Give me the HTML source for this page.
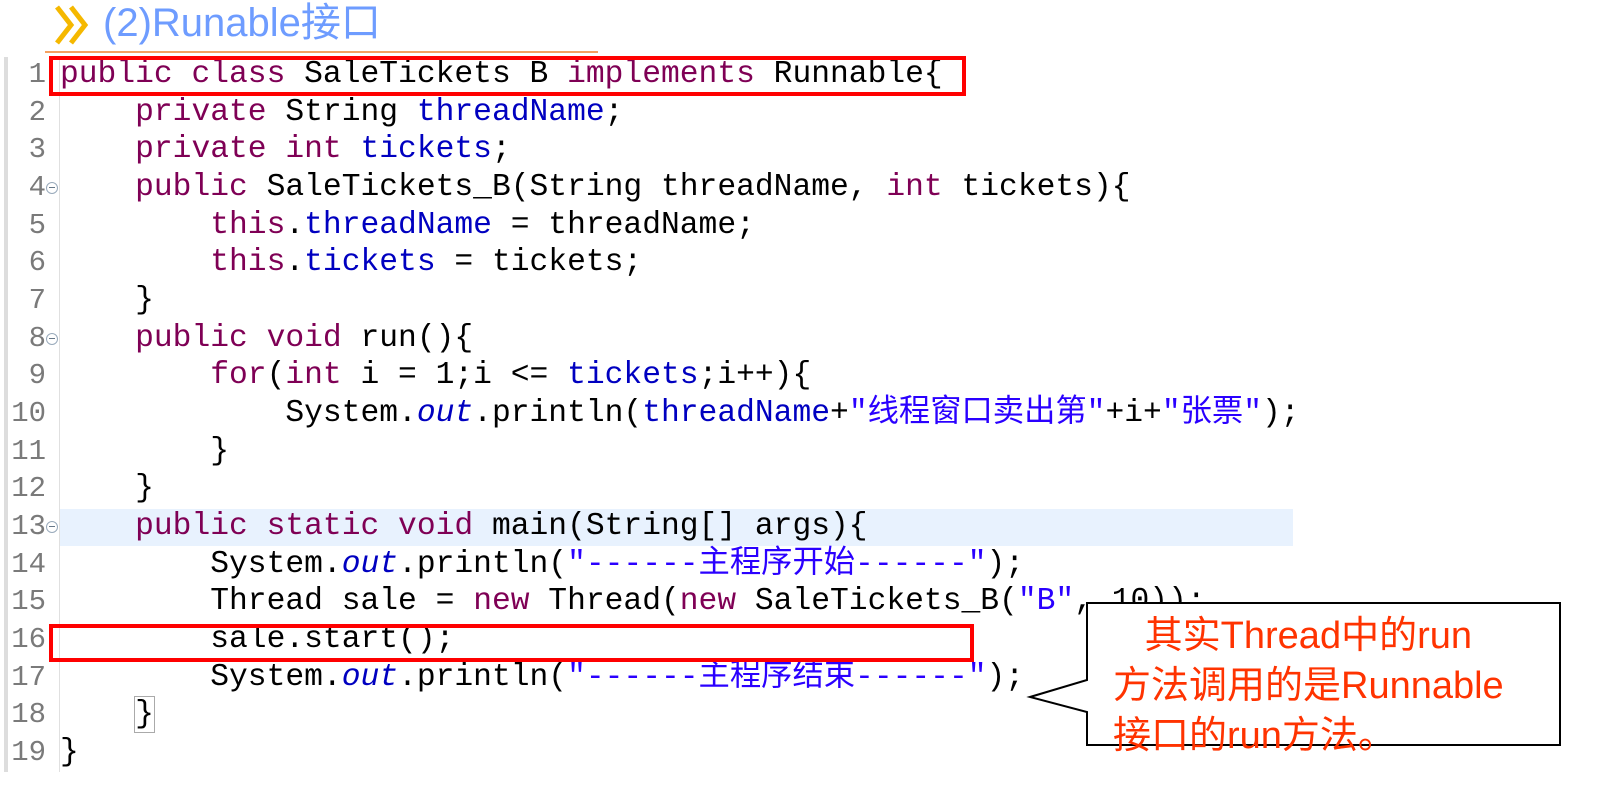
<!DOCTYPE html>
<html><head><meta charset="utf-8"><style>
body{margin:0;width:1599px;height:791px;background:#fff;position:relative;overflow:hidden;font-family:"Liberation Mono","Noto Sans CJK SC",monospace;}
.t{position:absolute;left:103px;top:-2px;font:40px "Liberation Sans","Noto Sans CJK SC",sans-serif;color:#6e9cff;line-height:50px;}
.hr{position:absolute;left:45px;top:51px;width:553px;height:2px;background:#f5a060;}
.code{position:absolute;left:0;top:56px;}
.ln{position:absolute;left:0;width:46px;text-align:right;color:#7a7a7a;font-size:29px;height:37.67px;line-height:37.67px;}
.l{position:absolute;left:60px;white-space:pre;font-size:31.3px;height:37.67px;line-height:37.67px;color:#000;}
.k{color:#7f0055}.f{color:#0000c0}.s{color:#2a00ff}.i{color:#0000c0;font-style:italic}
.fold{position:absolute;left:46px;width:10px;height:10px;border:1px solid #9ab;border-radius:50%;font-size:0}
.fold:after{content:"";position:absolute;left:2px;top:4px;width:6px;height:1px;background:#678}
.box{position:absolute;border:4px solid #f00;}
</style></head><body>
<svg style="position:absolute;left:55px;top:5px" width="40" height="40"><path d="M2 2 L16 20 L2 38 M16 2 L30 20 L16 38" stroke="#f5b800" stroke-width="5" fill="none"/></svg>
<div class="t">(2)Runable接口</div>
<div class="hr"></div>
<div style="position:absolute;left:4px;top:57px;width:4px;height:715px;background:#ddd"></div>
<div style="position:absolute;left:59px;top:57px;width:1px;height:715px;background:#e0e0e0"></div>
<div style="position:absolute;left:60px;top:509px;width:1233px;height:37px;background:#e8f2fe"></div>
<div class="code">
<div class="ln" style="top:0">1</div><div class="l" style="top:0"><span class="k">public class</span> SaleTickets B <span class="k">implements</span> Runnable{</div>
<div class="ln" style="top:37.67px">2</div><div class="l" style="top:37.67px">    <span class="k">private</span> String <span class="f">threadName</span>;</div>
<div class="ln" style="top:75.33px">3</div><div class="l" style="top:75.33px">    <span class="k">private int</span> <span class="f">tickets</span>;</div>
<div class="ln" style="top:113px">4</div><div class="fold" style="top:126px"></div><div class="l" style="top:113px">    <span class="k">public</span> SaleTickets_B(String threadName, <span class="k">int</span> tickets){</div>
<div class="ln" style="top:150.67px">5</div><div class="l" style="top:150.67px">        <span class="k">this</span>.<span class="f">threadName</span> = threadName;</div>
<div class="ln" style="top:188.33px">6</div><div class="l" style="top:188.33px">        <span class="k">this</span>.<span class="f">tickets</span> = tickets;</div>
<div class="ln" style="top:226px">7</div><div class="l" style="top:226px">    }</div>
<div class="ln" style="top:263.67px">8</div><div class="fold" style="top:277px"></div><div class="l" style="top:263.67px">    <span class="k">public void</span> run(){</div>
<div class="ln" style="top:301.33px">9</div><div class="l" style="top:301.33px">        <span class="k">for</span>(<span class="k">int</span> i = 1;i &lt;= <span class="f">tickets</span>;i++){</div>
<div class="ln" style="top:339px">10</div><div class="l" style="top:339px">            System.<span class="i">out</span>.println(<span class="f">threadName</span>+<span class="s">"线程窗口卖出第"</span>+i+<span class="s">"张票"</span>);</div>
<div class="ln" style="top:376.67px">11</div><div class="l" style="top:376.67px">        }</div>
<div class="ln" style="top:414.33px">12</div><div class="l" style="top:414.33px">    }</div>
<div class="ln" style="top:452px">13</div><div class="fold" style="top:465px"></div><div class="l" style="top:452px">    <span class="k">public static void</span> main(String[] args){</div>
<div class="ln" style="top:489.67px">14</div><div class="l" style="top:489.67px">        System.<span class="i">out</span>.println(<span class="s">"------主程序开始------"</span>);</div>
<div class="ln" style="top:527.33px">15</div><div class="l" style="top:527.33px">        Thread sale = <span class="k">new</span> Thread(<span class="k">new</span> SaleTickets_B(<span class="s">"B"</span>, 10));</div>
<div class="ln" style="top:565px">16</div><div class="l" style="top:565px">        sale.start();</div>
<div class="ln" style="top:602.67px">17</div><div class="l" style="top:602.67px">        System.<span class="i">out</span>.println(<span class="s">"------主程序结束------"</span>);</div>
<div class="ln" style="top:640.33px">18</div><div class="l" style="top:640.33px">    <span style="outline:1px solid #aaa">}</span></div>
<div class="ln" style="top:678px">19</div><div class="l" style="top:678px">}</div>
</div>
<div class="box" style="left:49px;top:56px;width:909px;height:32px"></div>
<div class="box" style="left:49px;top:624px;width:917px;height:30px"></div>
<svg style="position:absolute;left:0;top:0" width="1599" height="791">
<path d="M1087 603 H1560 V745 H1087 V712 L1030 697 L1087 680 Z" fill="#fff" stroke="#000" stroke-width="2"/>
</svg>
<div style="position:absolute;left:1113px;top:611px;width:480px;font:38px/50px 'Liberation Sans','Noto Sans CJK SC',sans-serif;color:#ff3300;white-space:nowrap">&nbsp;&nbsp;&nbsp;其实Thread中的run<br>方法调用的是Runnable<br>接口的run方法。</div>
</body></html>
